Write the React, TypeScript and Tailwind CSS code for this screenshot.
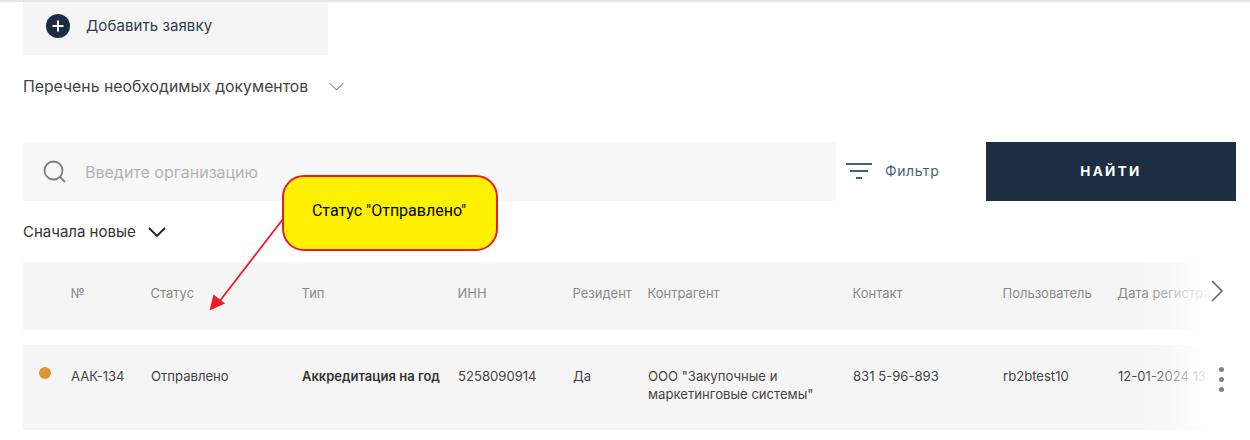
const columns = ["№", "Статус", "Тип", "ИНН", "Резидент", "Контрагент", "Контакт", "Пользователь", "Дата регистрации"];

const gridClass =
  "grid grid-cols-[80px_151px_156px_115px_75px_205px_150px_115px_180px] pl-12 overflow-hidden";

function Fade() {
  return (
    <div className="absolute right-0 top-0 bottom-0 w-[96px] bg-gradient-to-r from-white/0 to-white to-75%" />
  );
}

export default function App() {
  return (
    <div
      className="relative h-[440px] w-[1250px] overflow-hidden bg-white border-t-2 border-[#e4e7ea] text-[#333]"
      style={{ fontFamily: "Inter, 'Noto Sans', sans-serif" }}
    >
      <div className="pl-[23px] pr-[14px]">
        <button className="flex h-[53px] w-[305px] items-center gap-[16px] bg-[#f5f5f5] pl-[23px] pb-[5px]">
          <span className="flex h-6 w-6 items-center justify-center rounded-full bg-[#1d2e43]">
            <svg width="12" height="12" viewBox="0 0 12 12" fill="none" stroke="#fff" strokeWidth="2">
              <path d="M6 0.5v11M0.5 6h11" />
            </svg>
          </span>
          <span className="text-[15px] tracking-[0.08px] text-[#2f3d4f]">Добавить заявку</span>
        </button>

        <div className="mt-[21px] flex h-[22px] items-center text-[15.8px] text-[#444]">
          <span>Перечень необходимых документов</span>
          <svg className="ml-[21px] -translate-y-[1px]" width="15" height="9" viewBox="0 0 15 9" fill="none" stroke="#555" strokeWidth="0.9">
            <path d="M0.5 1l7 7 7-7" />
          </svg>
        </div>

        <div className="mt-[44px] flex h-[59px] items-stretch">
          <div className="flex w-[813px] items-center bg-[#f7f7f7] pl-[20px]">
            <svg width="23" height="23" viewBox="0 0 23 23" fill="none" stroke="#7c7c7c" strokeWidth="1.8">
              <circle cx="10.5" cy="10.5" r="9" />
              <path d="M17 17l4.5 4.5" strokeLinecap="round" />
            </svg>
            <span className="ml-[19px] text-[16px] text-[#b3b3b3]">Введите организацию</span>
          </div>
          <div className="flex w-[150px] items-center pl-[10px] pb-[2px]">
            <svg width="26" height="16" viewBox="0 0 26 16" fill="none" stroke="#3f6670" strokeWidth="2">
              <path d="M0 1h26M4 8h18M10 15h6" />
            </svg>
            <span className="ml-[13px] text-[14px] tracking-[0.6px] text-[#44676f]">Фильтр</span>
          </div>
          <button className="flex w-[250px] items-center justify-center bg-[#1d2e43] pb-[1px] text-[13.5px] font-bold tracking-[2.3px] text-white">
            НАЙТИ
          </button>
        </div>

        <div className="mt-[20px] flex h-[22px] items-center text-[15px] text-[#333]">
          <span>Сначала новые</span>
          <svg className="ml-[12px]" width="18" height="11" viewBox="0 0 18 11" fill="none" stroke="#222" strokeWidth="1.8">
            <path d="M1 1l8 8 8-8" />
          </svg>
        </div>

        <div className="relative mt-[19px] h-[68px] bg-[#f5f5f5]">
          <div className={`${gridClass} h-full items-center pb-[4px] text-[13px] text-[#8a8a8a]`}>
            {columns.map((c) => (
              <span key={c} className="whitespace-nowrap -translate-x-[0.5px]">
                {c}
              </span>
            ))}
          </div>
          <Fade />
          <svg
            className="absolute right-[12px] top-[18px]"
            width="14"
            height="22"
            viewBox="0 0 14 22"
            fill="none"
            stroke="#666"
            strokeWidth="1.6"
          >
            <path d="M2 1l10 10-10 10" />
          </svg>
        </div>

        <div className="relative mt-[15px] h-[85px] bg-[#f5f5f5]">
          <div className={`${gridClass} h-full items-start pt-[22px] text-[13.1px] leading-[18px] text-[#444]`}>
            <span>ААК-134</span>
            <span>Отправлено</span>
            <span className="whitespace-nowrap text-[13px] font-semibold text-[#333]">Аккредитация на год</span>
            <span>5258090914</span>
            <span>Да</span>
            <span>
              ООО "Закупочные и
              <br />
              маркетинговые системы"
            </span>
            <span>831 5-96-893</span>
            <span>rb2btest10</span>
            <span className="whitespace-nowrap">12-01-2024 13:45</span>
          </div>
          <span className="absolute left-[16px] top-[22px] h-3 w-3 rounded-full bg-[#dd9633]" />
          <Fade />
          <div className="absolute right-[12px] top-[22px] flex flex-col gap-[5px]">
            <span className="h-[5px] w-[5px] rounded-full bg-[#808080]" />
            <span className="h-[5px] w-[5px] rounded-full bg-[#808080]" />
            <span className="h-[5px] w-[5px] rounded-full bg-[#808080]" />
          </div>
        </div>
      </div>

      {/* annotation over the page */}
      <svg className="absolute left-0 top-[-2px]" width="300" height="320" viewBox="0 0 300 320" fill="none">
        <path d="M283 219L219 302" stroke="#ed1c24" strokeWidth="1.8" />
        <path d="M209.5 310.5L213.5 294.5L225 303.5Z" fill="#ed1c24" />
      </svg>
      <div
        className="absolute left-[282px] top-[173px] flex h-[76px] w-[216px] items-center justify-center rounded-[22px] border-2 border-[#ed1c24] bg-[#fff200] pb-[5px] pr-[2px] text-[16px] text-black"
        style={{ fontFamily: "Roboto, 'Liberation Sans', sans-serif" }}
      >
        Статус "Отправлено"
      </div>
    </div>
  );
}
